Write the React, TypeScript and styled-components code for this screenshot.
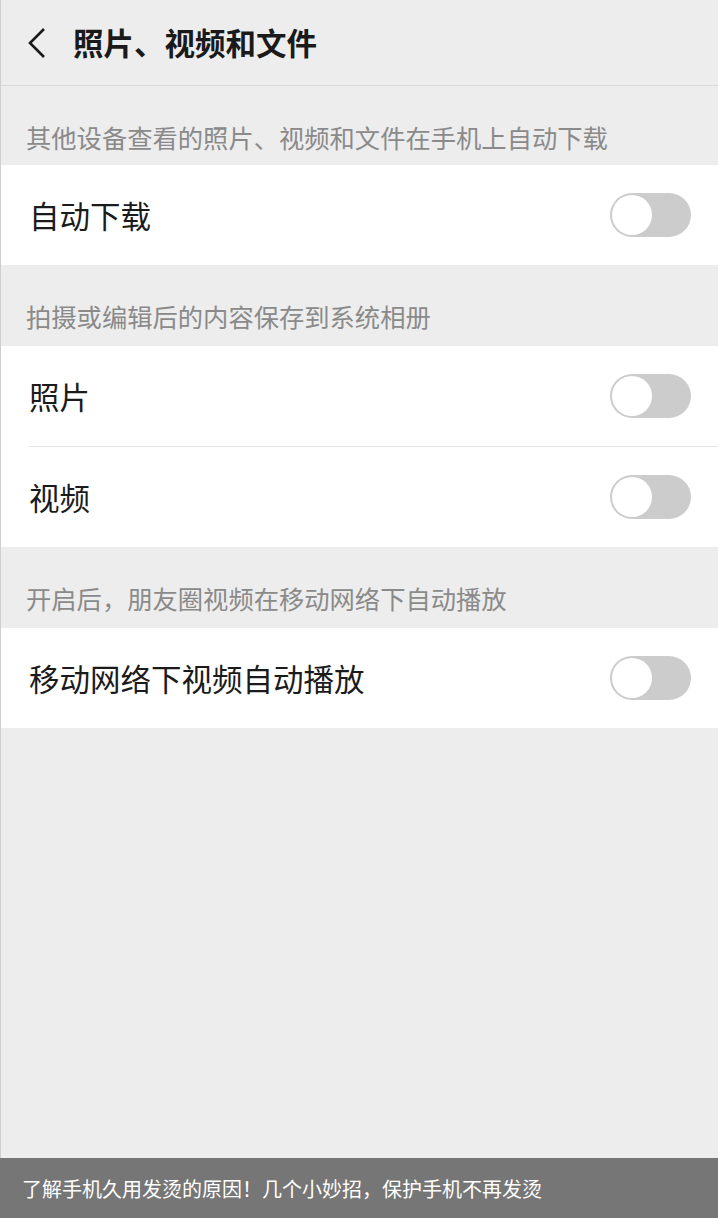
import React, {useState} from 'react';
import styled, {createGlobalStyle} from 'styled-components';

const GlobalStyle = createGlobalStyle`
  html, body {
    margin: 0;
    padding: 0;
    background: #ededed;
  }

  body {
    font-family: "Noto Sans CJK SC", "Noto Sans", sans-serif;
  }

  * {
    box-sizing: border-box;
  }
`;

const Page = styled.div`
  display: flex;
  flex-direction: column;
  min-height: 100vh;
  background: #ededed;
  border-left: 1px solid #cfcfcf;
`;

const Header = styled.header`
  display: flex;
  align-items: center;
  height: 86px;
  padding-left: 26px;
  border-bottom: 1px solid #d9d9d9;
`;

const BackButton = styled.button`
  display: flex;
  align-items: center;
  padding: 0;
  border: none;
  background: none;
  cursor: pointer;
`;

const Title = styled.h1`
  margin: 0 0 0 26px;
  font-size: 30.5px;
  font-weight: 600;
  color: #1a1a1a;
  line-height: 1;
`;

const SectionLabel = styled.div`
  height: ${({$first}: {$first?: boolean}) => ($first ? '79px' : '81px')};
  padding: 35px 0 0 25px;
  font-size: 25.3px;
  line-height: 33px;
  color: #8a8a8a;
`;

const Group = styled.div`
  background: #fff;
`;

const Row = styled.div`
  display: flex;
  align-items: center;
  justify-content: space-between;
  height: 100px;
  padding: 0 27px 0 28px;
  font-size: 30.5px;
  color: #1b1b1b;
`;

const Divider = styled.div`
  height: 1px;
  margin-left: 28px;
  background: #e6e6e6;
`;

const Track = styled.button<{$on: boolean}>`
  position: relative;
  width: 81px;
  height: 44px;
  padding: 0;
  border: none;
  border-radius: 22px;
  background: ${({$on}) => ($on ? '#07c160' : '#cccccc')};
  cursor: pointer;
  transition: background 0.2s;
`;

const Knob = styled.span<{$on: boolean}>`
  position: absolute;
  top: 2px;
  left: ${({$on}) => ($on ? '39px' : '2px')};
  width: 40px;
  height: 40px;
  border-radius: 50%;
  background: #fff;
  transition: left 0.2s;
`;

const Spacer = styled.div`
  flex: 1;
`;

const Toast = styled.div`
  display: flex;
  align-items: center;
  height: 60px;
  margin-left: -1px;
  padding-left: 22px;
  background: #767676;
  color: #fff;
  font-size: 20px;
`;

const Toggle: React.FC = () => {
  const [on, setOn] = useState(false);
  return (
    <Track $on={on} onClick={() => setOn(!on)}>
      <Knob $on={on} />
    </Track>
  );
};

export default function App() {
  return (
    <Page>
      <GlobalStyle />
      <Header>
        <BackButton>
          <svg width="20" height="32" viewBox="0 0 20 32">
            <polyline
              points="17,2 3,16 17,30"
              fill="none"
              stroke="#1a1a1a"
              strokeWidth="2.6"
            />
          </svg>
        </BackButton>
        <Title>照片、视频和文件</Title>
      </Header>

      <SectionLabel $first>其他设备查看的照片、视频和文件在手机上自动下载</SectionLabel>
      <Group>
        <Row>
          自动下载
          <Toggle />
        </Row>
      </Group>

      <SectionLabel>拍摄或编辑后的内容保存到系统相册</SectionLabel>
      <Group>
        <Row>
          照片
          <Toggle />
        </Row>
        <Divider />
        <Row>
          视频
          <Toggle />
        </Row>
      </Group>

      <SectionLabel>开启后，朋友圈视频在移动网络下自动播放</SectionLabel>
      <Group>
        <Row>
          移动网络下视频自动播放
          <Toggle />
        </Row>
      </Group>

      <Spacer />
      <Toast>了解手机久用发烫的原因！几个小妙招，保护手机不再发烫</Toast>
    </Page>
  );
}
